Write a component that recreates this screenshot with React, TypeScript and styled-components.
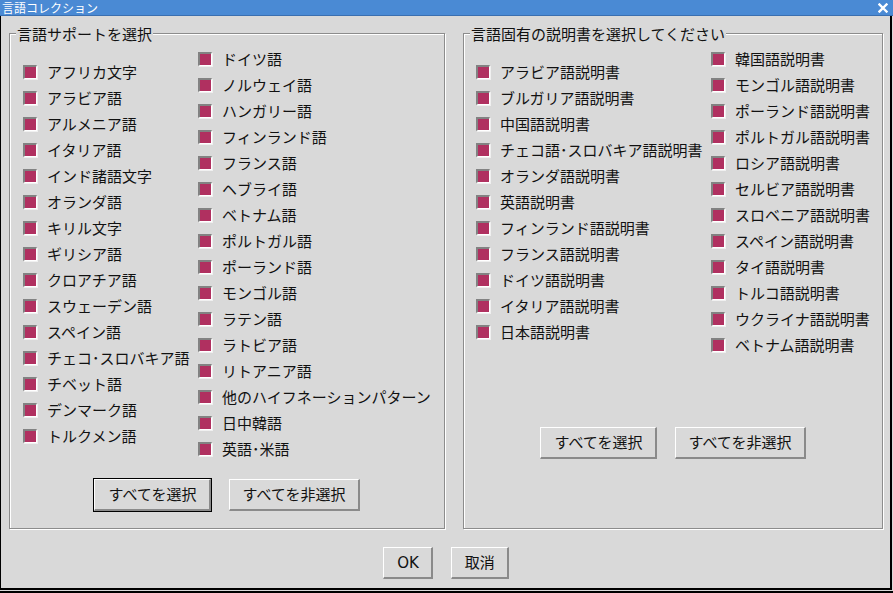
import React from "react";
import styled, { createGlobalStyle } from "styled-components";

const GlobalStyle = createGlobalStyle`
  html, body { margin: 0; padding: 0; background: #d9d9d9; }
  * { box-sizing: border-box; }
`;

const FONT = `"DejaVu Sans", "Noto Sans CJK JP", sans-serif`;
const JP = `"Noto Sans CJK JP", sans-serif`;

const Frame = styled.div`
  width: 893px;
  height: 593px;
  display: flex;
  flex-direction: column;
  background: #d9d9d9;
  border-bottom: 2px solid #000;
  font-family: ${FONT};
  color: #111;
`;

const TitleBar = styled.div`
  height: 16px;
  flex: none;
  display: flex;
  align-items: center;
  justify-content: space-between;
  background: #4a8ad4;
  border-bottom: 1px solid #3a6fb0;
  padding: 0 5px 0 2px;
  color: #fff;
`;

const TitleText = styled.span`
  font-family: ${JP};
  font-size: 12px;
  line-height: 15px;
`;

const Body = styled.div`
  flex: 1;
  margin: 0 1px 1px 0;
  border-left: 1px solid #000;
  border-right: 2px solid #000;
  border-bottom: 2px solid #000;
  padding: 17px 7px 0 8px;
  display: flex;
  flex-direction: column;
`;

const GroupsRow = styled.div`
  display: flex;
  gap: 18px;
`;

const GroupBox = styled.div<{ $w: number; $pad: number }>`
  width: ${(p) => p.$w}px;
  height: 496px;
  border: 1px solid #8c8c8c;
  box-shadow: inset 1px 1px 0 #fff, 1px 1px 0 #fff;
  padding-left: ${(p) => p.$pad}px;
  display: flex;
  flex-direction: column;
`;

const LegendWrap = styled.div<{ $shift: number }>`
  display: flex;
  margin-left: -${(p) => p.$shift}px;
`;

const Legend = styled.span`
  margin-top: -10px;
  background: #d9d9d9;
  padding: 0 1px;
  font-family: ${JP};
  font-size: 15px;
  line-height: 20px;
  white-space: nowrap;
`;

const Columns = styled.div<{ $col1: number }>`
  display: grid;
  grid-template-columns: ${(p) => p.$col1}px auto;
  align-items: center;
  margin-top: 2px;
`;

const Column = styled.div`
  display: flex;
  flex-direction: column;
`;

const CheckRow = styled.div`
  height: 26px;
  display: flex;
  align-items: center;
  gap: 10px;
  white-space: nowrap;
`;

const CheckBox = styled.span`
  width: 14px;
  height: 14px;
  flex: none;
  background: #b03060;
  border-top: 2px solid #828282;
  border-left: 2px solid #828282;
  border-bottom: 1px solid #fff;
  border-right: 1px solid #fff;
  box-shadow: 1px 1px 0 #f0f0f0;
`;

const Label = styled.span`
  font-family: ${JP};
  font-size: 15px;
  line-height: 20px;
`;

const ButtonRow = styled.div<{ $top: number; $shift: number }>`
  display: flex;
  justify-content: center;
  gap: 18px;
  margin-top: ${(p) => p.$top}px;
  margin-left: -${(p) => p.$shift}px;
`;

const Button = styled.button<{ $focus?: boolean }>`
  height: 32px;
  padding: 0 12px 0 13px;
  background: #d9d9d9;
  border-top: 1px solid #fff;
  border-left: 1px solid #fff;
  border-bottom: 2px solid #8a8a8a;
  border-right: 2px solid #8a8a8a;
  border-radius: 0;
  font-family: ${FONT};
  font-size: 15px;
  line-height: 20px;
  color: #111;
  white-space: nowrap;
  box-shadow: ${(p) => (p.$focus ? "0 0 0 1px #000" : "none")};
`;

const DialogButtons = styled.div`
  display: flex;
  justify-content: center;
  gap: 18px;
  margin-top: 18px;
`;

const leftCol1 = [
  "アフリカ文字",
  "アラビア語",
  "アルメニア語",
  "イタリア語",
  "インド諸語文字",
  "オランダ語",
  "キリル文字",
  "ギリシア語",
  "クロアチア語",
  "スウェーデン語",
  "スペイン語",
  "チェコ･スロバキア語",
  "チベット語",
  "デンマーク語",
  "トルクメン語",
];
const leftCol2 = [
  "ドイツ語",
  "ノルウェイ語",
  "ハンガリー語",
  "フィンランド語",
  "フランス語",
  "ヘブライ語",
  "ベトナム語",
  "ポルトガル語",
  "ポーランド語",
  "モンゴル語",
  "ラテン語",
  "ラトビア語",
  "リトアニア語",
  "他のハイフネーションパターン",
  "日中韓語",
  "英語･米語",
];
const rightCol1 = [
  "アラビア語説明書",
  "ブルガリア語説明書",
  "中国語説明書",
  "チェコ語･スロバキア語説明書",
  "オランダ語説明書",
  "英語説明書",
  "フィンランド語説明書",
  "フランス語説明書",
  "ドイツ語説明書",
  "イタリア語説明書",
  "日本語説明書",
];
const rightCol2 = [
  "韓国語説明書",
  "モンゴル語説明書",
  "ポーランド語説明書",
  "ポルトガル語説明書",
  "ロシア語説明書",
  "セルビア語説明書",
  "スロベニア語説明書",
  "スペイン語説明書",
  "タイ語説明書",
  "トルコ語説明書",
  "ウクライナ語説明書",
  "ベトナム語説明書",
];

const CheckList: React.FC<{ items: string[] }> = ({ items }) => (
  <Column>
    {items.map((t) => (
      <CheckRow key={t}>
        <CheckBox />
        <Label>{t}</Label>
      </CheckRow>
    ))}
  </Column>
);

const CloseIcon = () => (
  <svg width="10" height="10" viewBox="0 0 10 10">
    <path d="M1.5 1.5 L8.5 8.5 M8.5 1.5 L1.5 8.5" stroke="#fff" strokeWidth="2.4" strokeLinecap="square" />
  </svg>
);

export default function App() {
  return (
    <>
      <GlobalStyle />
      <Frame>
        <TitleBar>
          <TitleText>言語コレクション</TitleText>
          <CloseIcon />
        </TitleBar>
        <Body>
          <GroupsRow>
            <GroupBox $w={436} $pad={13}>
              <LegendWrap $shift={7}>
                <Legend>言語サポートを選択</Legend>
              </LegendWrap>
              <Columns $col1={175}>
                <CheckList items={leftCol1} />
                <CheckList items={leftCol2} />
              </Columns>
              <ButtonRow $top={17} $shift={13}>
                <Button $focus>すべてを選択</Button>
                <Button>すべてを非選択</Button>
              </ButtonRow>
            </GroupBox>
            <GroupBox $w={420} $pad={12}>
              <LegendWrap $shift={6}>
                <Legend>言語固有の説明書を選択してください</Legend>
              </LegendWrap>
              <Columns $col1={235}>
                <CheckList items={rightCol1} />
                <CheckList items={rightCol2} />
              </Columns>
              <ButtonRow $top={69} $shift={12}>
                <Button>すべてを選択</Button>
                <Button>すべてを非選択</Button>
              </ButtonRow>
            </GroupBox>
          </GroupsRow>
          <DialogButtons>
            <Button>OK</Button>
            <Button>取消</Button>
          </DialogButtons>
        </Body>
      </Frame>
    </>
  );
}
